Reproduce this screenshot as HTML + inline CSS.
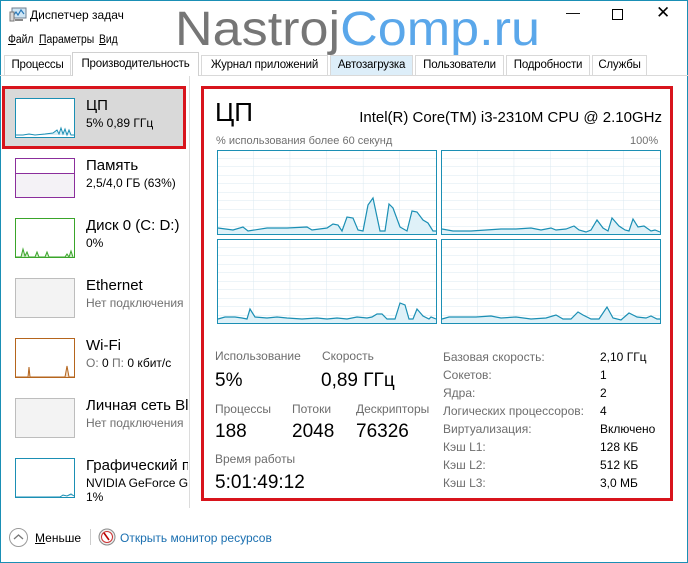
<!DOCTYPE html>
<html><head><meta charset="utf-8"><style>
*{margin:0;padding:0;box-sizing:border-box}
body{width:688px;height:563px;overflow:hidden;background:#fff;font-family:"Liberation Sans","Noto Sans CJK SC",sans-serif;color:#000;position:relative}
.a{position:absolute;white-space:nowrap}
.win{position:absolute;left:0;top:0;width:688px;height:563px;border:1px solid #1a8fb5}
.tab{position:absolute;top:55px;height:20px;font-size:11.5px;line-height:19px;text-align:center;border:1px solid #d9d9d9;border-bottom:none;background:#fff;letter-spacing:-0.2px}
.gr{font-size:12px;color:#6d6d6d}
.big{font-size:19px;color:#000}
.mn{font-size:11.5px;top:34px;transform-origin:0 0;transform:scaleX(0.9)}
</style></head><body>
<div class="win"></div>
<svg class="a" style="left:9px;top:7px" width="18" height="16" viewBox="0 0 18 16"><rect x="3" y="1" width="14" height="10" fill="#cfe6f5" stroke="#6f7f8f"/><polyline points="4,9 7,5 9,8 12,3 15,7" fill="none" stroke="#2878b8" stroke-width="1.2"/><rect x="1" y="5" width="4" height="9" fill="#d8d8d8" stroke="#777"/><rect x="6" y="12" width="8" height="2" fill="#888"/></svg>
<div class="a" style="left:30px;top:8px;font-size:12px">Диспетчер задач</div>
<svg class="a" style="left:170px;top:0" width="380" height="60"><text x="5" y="45" font-family="Liberation Sans" font-size="48" textLength="365" lengthAdjust="spacingAndGlyphs"><tspan fill="#767676">Nastroj</tspan><tspan fill="#5aa7ea">Comp.ru</tspan></text></svg>
<div class="a" style="left:566px;top:4px;font-size:14px">&#8212;</div>
<div class="a" style="left:612px;top:9px;width:11px;height:11px;border:1px solid #000"></div>
<div class="a" style="left:656px;top:3px;font-size:17px">&#10005;</div>
<div class="a mn" style="left:8px"><u>Ф</u>айл</div>
<div class="a mn" style="left:39px"><u>П</u>араметры</div>
<div class="a mn" style="left:99px"><u>В</u>ид</div>
<div class="a" style="left:0;top:75px;width:688px;height:1px;background:#d9d9d9"></div>
<div class="tab" style="left:4px;width:67px">Процессы</div>
<div class="tab" style="left:72px;top:52px;height:24px;width:127px;line-height:22px;border-color:#d0d0d0">Производительность</div>
<div class="tab" style="left:201px;width:127px">Журнал приложений</div>
<div class="tab" style="left:330px;width:83px;background:#ddeef9">Автозагрузка</div>
<div class="tab" style="left:415px;width:89px">Пользователи</div>
<div class="tab" style="left:506px;width:84px">Подробности</div>
<div class="tab" style="left:592px;width:55px">Службы</div>
<div class="a" style="left:189px;top:76px;width:1px;height:432px;background:#dcdcdc"></div>
<div class="a" style="left:4px;top:88px;width:180px;height:58px;background:#d9d9d9"></div>
<div class="a" style="left:2px;top:86px;width:184px;height:63px;border:3px solid #d8141c"></div>
<svg class="a" style="left:15px;top:98px" width="60" height="40"><rect x=".5" y=".5" width="59" height="39" fill="#fff" stroke="#1b8fb4"/><polyline points="1,37 8,37 14,36 20,37 30,36 38,35 42,32 44,36 46,30 48,36 50,31 52,37 54,32 56,37 59,37" fill="#d8eef6" stroke="#1b8fb4"/></svg>
<div class="a" style="left:86px;top:97px;font-size:15px">ЦП</div>
<div class="a" style="left:86px;top:116px;font-size:12px">5% 0,89 ГГц</div>
<svg class="a" style="left:15px;top:158px" width="60" height="40"><rect x=".5" y=".5" width="59" height="39" fill="#f4f2f6" stroke="#8b2e9c"/><rect x=".5" y=".5" width="59" height="15" fill="#fff" stroke="#8b2e9c"/></svg>
<div class="a" style="left:86px;top:157px;font-size:15px">Память</div>
<div class="a" style="left:86px;top:176px;font-size:12px">2,5/4,0 ГБ (63%)</div>
<svg class="a" style="left:15px;top:218px" width="60" height="40"><rect x=".5" y=".5" width="59" height="39" fill="#fff" stroke="#3aa52a"/><polyline points="1,39 6,39 8,31 10,38 12,34 14,39 20,39 22,34 24,39 30,39 32,34 34,39 50,39 52,36 54,39 56,33 58,39" fill="#cfeac8" stroke="#3aa52a"/></svg>
<div class="a" style="left:86px;top:217px;font-size:15px">Диск 0 (C: D:)</div>
<div class="a" style="left:86px;top:236px;font-size:12px">0%</div>
<div class="a" style="left:15px;top:278px;width:60px;height:40px;border:1px solid #bdbdbd;background:#f3f3f3"></div>
<div class="a" style="left:86px;top:277px;font-size:15px">Ethernet</div>
<div class="a" style="left:86px;top:296px;font-size:12px;color:#707070">Нет подключения</div>
<svg class="a" style="left:15px;top:338px" width="60" height="40"><rect x=".5" y=".5" width="59" height="39" fill="#fff" stroke="#b5651d"/><polyline points="1,39 13,39 14,29 15,39 50,39 52,28 54,39 59,39" fill="#f0dcc8" stroke="#b5651d"/></svg>
<div class="a" style="left:86px;top:337px;font-size:15px">Wi-Fi</div>
<div class="a" style="left:86px;top:356px;font-size:12px"><span style="color:#707070">О:</span> 0 <span style="color:#707070">П:</span> 0 кбит/с</div>
<div class="a" style="left:15px;top:398px;width:60px;height:40px;border:1px solid #bdbdbd;background:#f3f3f3"></div>
<div class="a" style="left:86px;top:397px;font-size:15px;width:102px;overflow:hidden">Личная сеть Bluetooth</div>
<div class="a" style="left:86px;top:416px;font-size:12px;color:#707070">Нет подключения</div>
<svg class="a" style="left:15px;top:458px" width="60" height="40"><rect x=".5" y=".5" width="59" height="39" fill="#fff" stroke="#1b8fb4"/><polyline points="1,39 45,39 48,37 52,38 56,36 59,38" fill="#d8eef6" stroke="#1b8fb4"/></svg>
<div class="a" style="left:86px;top:457px;font-size:15px;width:102px;overflow:hidden">Графический процессор</div>
<div class="a" style="left:86px;top:476px;font-size:12px;width:102px;overflow:hidden">NVIDIA GeForce GT 540M</div>
<div class="a" style="left:86px;top:490px;font-size:12px">1%</div>
<div class="a" style="left:201px;top:86px;width:472px;height:415px;border:3px solid #d8141c"></div>
<div class="a" style="left:215px;top:97px;font-size:26px">ЦП</div>
<div class="a" style="left:340px;top:109px;font-size:15px;width:322px;text-align:right">Intel(R) Core(TM) i3-2310M CPU @ 2.10GHz</div>
<div class="a" style="left:216px;top:135px;font-size:11px;color:#707070">% использования более 60 секунд</div>
<div class="a" style="left:630px;top:135px;font-size:11px;color:#707070">100%</div>
<svg class="a" style="left:217px;top:150px" width="444" height="175">
<defs><pattern id="k" width="36.6" height="8.5" patternUnits="userSpaceOnUse"><path d="M36.6 0V8.5M0 8.5H36.6" stroke="#dbe9f0" fill="none"/></pattern></defs>
<g><rect x=".5" y=".5" width="219" height="84" fill="#fff"/><rect x=".5" y=".5" width="219" height="84" fill="url(#k)" stroke="#1b8fb4"/>
<polygon points="1,78 16,80 26,77 31,81 50,78 70,78 90,77 95,80 110,78 116,74 121,75 125,81 130,67 136,68 141,80 146,81 151,55 156,48 163,81 168,81 172,54 176,58 183,77 190,81 195,61 200,62 206,70 211,73 216,81 219,81 219,84 1,84" fill="#dff1f8"/>
<polyline points="1,78 16,80 26,77 31,81 50,78 70,78 90,77 95,80 110,78 116,74 121,75 125,81 130,67 136,68 141,80 146,81 151,55 156,48 163,81 168,81 172,54 176,58 183,77 190,81 195,61 200,62 206,70 211,73 216,81 219,81" fill="none" stroke="#1b8fb4" stroke-width="1.2"/></g>
<g transform="translate(224,0)"><rect x=".5" y=".5" width="219" height="84" fill="#fff"/><rect x=".5" y=".5" width="219" height="84" fill="url(#k)" stroke="#1b8fb4"/>
<polygon points="1,79 12,81 30,81 45,80 60,79 75,79 90,78 100,80 110,78 115,80 125,79 133,76 138,80 145,82 150,80 156,70 162,78 167,81 171,68 178,76 184,80 188,81 192,69 197,77 203,76 210,81 214,80 219,82 219,84 1,84" fill="#dff1f8"/>
<polyline points="1,79 12,81 30,81 45,80 60,79 75,79 90,78 100,80 110,78 115,80 125,79 133,76 138,80 145,82 150,80 156,70 162,78 167,81 171,68 178,76 184,80 188,81 192,69 197,77 203,76 210,81 214,80 219,82" fill="none" stroke="#1b8fb4" stroke-width="1.2"/></g>
<g transform="translate(0,89)"><rect x=".5" y=".5" width="219" height="84" fill="#fff"/><rect x=".5" y=".5" width="219" height="84" fill="url(#k)" stroke="#1b8fb4"/>
<polygon points="1,80 8,78 18,78 25,79 30,80 33,70 38,78 50,79 60,78 70,79 85,80 100,79 110,80 120,79 130,80 140,78 150,79 155,78 160,75 165,75 170,80 178,80 183,64 188,66 192,80 196,80 200,70 206,77 212,80 214,78 219,80 219,84 1,84" fill="#dff1f8"/>
<polyline points="1,80 8,78 18,78 25,79 30,80 33,70 38,78 50,79 60,78 70,79 85,80 100,79 110,80 120,79 130,80 140,78 150,79 155,78 160,75 165,75 170,80 178,80 183,64 188,66 192,80 196,80 200,70 206,77 212,80 214,78 219,80" fill="none" stroke="#1b8fb4" stroke-width="1.2"/></g>
<g transform="translate(224,89)"><rect x=".5" y=".5" width="219" height="84" fill="#fff"/><rect x=".5" y=".5" width="219" height="84" fill="url(#k)" stroke="#1b8fb4"/>
<polygon points="1,80 8,78 20,78 35,78 50,77 60,79 75,78 90,80 105,79 115,76 122,80 130,80 137,73 142,76 150,80 158,80 166,68 172,79 180,81 188,74 196,78 205,79 210,77 216,80 219,80 219,84 1,84" fill="#dff1f8"/>
<polyline points="1,80 8,78 20,78 35,78 50,77 60,79 75,78 90,80 105,79 115,76 122,80 130,80 137,73 142,76 150,80 158,80 166,68 172,79 180,81 188,74 196,78 205,79 210,77 216,80 219,80" fill="none" stroke="#1b8fb4" stroke-width="1.2"/></g>
</svg>
<div class="a gr" style="left:215px;top:349px">Использование</div>
<div class="a gr" style="left:322px;top:349px">Скорость</div>
<div class="a big" style="left:215px;top:370px">5%</div>
<div class="a big" style="left:321px;top:370px">0,89 ГГц</div>
<div class="a gr" style="left:215px;top:402px">Процессы</div>
<div class="a gr" style="left:292px;top:402px">Потоки</div>
<div class="a gr" style="left:356px;top:402px">Дескрипторы</div>
<div class="a big" style="left:215px;top:421px">188</div>
<div class="a big" style="left:292px;top:421px">2048</div>
<div class="a big" style="left:356px;top:421px">76326</div>
<div class="a gr" style="left:215px;top:452px">Время работы</div>
<div class="a big" style="left:215px;top:472px">5:01:49:12</div>
<div class="a gr" style="left:443px;top:348px;line-height:18px">Базовая скорость:<br>Сокетов:<br>Ядра:<br>Логических процессоров:<br>Виртуализация:<br>Кэш L1:<br>Кэш L2:<br>Кэш L3:</div>
<div class="a" style="left:600px;top:348px;line-height:18px;font-size:12px">2,10 ГГц<br>1<br>2<br>4<br>Включено<br>128 КБ<br>512 КБ<br>3,0 МБ</div>
<div class="a" style="left:9px;top:528px;width:19px;height:19px;border:1px solid #9a9a9a;border-radius:50%"></div>
<svg class="a" style="left:13px;top:533px" width="11" height="8"><polyline points="1,6 5.5,2 10,6" fill="none" stroke="#777" stroke-width="1.3"/></svg>
<div class="a" style="left:35px;top:531px;font-size:12px"><u>М</u>еньше</div>
<div class="a" style="left:90px;top:529px;width:1px;height:16px;background:#ccc"></div>
<svg class="a" style="left:98px;top:528px" width="18" height="18"><circle cx="9" cy="9" r="8" fill="#eee" stroke="#8a8a8a"/><circle cx="9" cy="9" r="5.5" fill="#fff" stroke="#c33"/><line x1="6" y1="5" x2="11" y2="12" stroke="#b00" stroke-width="1.6"/></svg>
<div class="a" style="left:120px;top:531px;font-size:12px;color:#1a6fb0">Открыть монитор ресурсов</div>
</body></html>
